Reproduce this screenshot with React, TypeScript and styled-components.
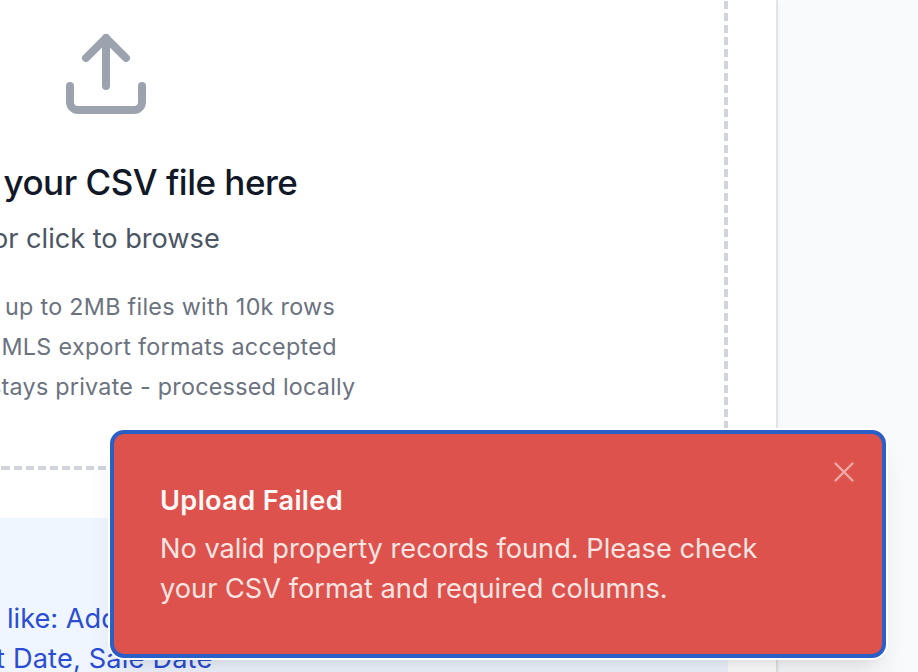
import React from "react";
import styled, { createGlobalStyle } from "styled-components";

const GlobalStyle = createGlobalStyle`
  * { box-sizing: border-box; }
  body { margin: 0; overflow: hidden; }
`;

const Page = styled.main`
  position: relative;
  width: 918px;
  height: 672px;
  overflow: hidden;
  background: #f9fafc;
  font-family: Inter, "Liberation Sans", sans-serif;
`;

const Card = styled.section`
  width: 778px;
  height: 672px;
  background: #fff;
  border-right: 2px solid #e4e4e4;
  box-shadow: 0 2px 4px rgba(0, 0, 0, 0.05);
`;

const DropZone = styled.div`
  display: flex;
  flex-direction: column;
  width: 728px;
  height: 470px;
  padding-top: 26px;
  overflow: hidden;
  background:
    repeating-linear-gradient(to bottom, #d1d5db 0 8px, transparent 8px 12px) right 0 top -11px / 4px 492px no-repeat,
    repeating-linear-gradient(to right, #d1d5db 0 8.1px, transparent 8.1px 12.08px) left -10.6px bottom 0 / 740px 4px no-repeat;
`;

const UploadIcon = styled.svg`
  width: 96px;
  height: 96px;
  margin-left: 58px;
  flex: none;
`;

type LineProps = { $x: number; $spacing: number };

const Heading = styled.h3<LineProps>`
  margin: 32px 0 0 ${(p) => p.$x}px;
  font-size: 35px;
  line-height: 56px;
  font-weight: 500;
  letter-spacing: ${(p) => p.$spacing}px;
  color: #111827;
  white-space: nowrap;
`;

const Hint = styled.p<LineProps>`
  margin: 9px 0 0 ${(p) => p.$x}px;
  font-size: 27.2px;
  line-height: 40px;
  letter-spacing: ${(p) => p.$spacing}px;
  color: #4b5563;
  white-space: nowrap;
`;

const Notes = styled.div`
  display: flex;
  flex-direction: column;
  gap: 8px;
  margin-top: 32px;
`;

const Note = styled.p<LineProps>`
  margin: 0 0 0 ${(p) => p.$x}px;
  font-size: 23.3px;
  line-height: 32px;
  letter-spacing: ${(p) => p.$spacing}px;
  color: #6b7280;
  white-space: nowrap;
`;

const InfoPanel = styled.div`
  width: 728px;
  height: 154px;
  margin-top: 48px;
  padding-top: 81px;
  overflow: hidden;
  background: #eff6ff;
`;

const InfoLine = styled.p<LineProps>`
  margin: 0 0 0 ${(p) => p.$x}px;
  font-size: 27.2px;
  line-height: 40px;
  letter-spacing: ${(p) => p.$spacing}px;
  color: #2b4dd3;
  white-space: nowrap;
`;

const Toast = styled.div`
  position: absolute;
  right: 32px;
  bottom: 14px;
  width: 776px;
  height: 228px;
  padding: 47px 46px 45px;
  border: 4px solid #2a5fc7;
  border-radius: 14px;
  background: #dd524c;
  box-shadow: 0 0 0 2px #fff, 0 20px 30px -6px rgba(0, 0, 0, 0.1), 0 8px 12px -8px rgba(0, 0, 0, 0.1);
`;

const ToastTitle = styled.div`
  font-size: 27.2px;
  line-height: 40px;
  font-weight: 600;
  letter-spacing: 0.33px;
  color: #fff8f7;
`;

const ToastLine = styled.div`
  font-size: 27.2px;
  line-height: 40px;
  color: #fae5e3;
  white-space: nowrap;
`;

const ToastBody = styled.div`
  margin-top: 8px;
`;

const CloseButton = styled.button`
  position: absolute;
  top: 22px;
  right: 22px;
  display: flex;
  width: 32px;
  height: 32px;
  padding: 0;
  border: 0;
  background: transparent;
  color: #efa9a5;
`;

export default function App() {
  return (
    <>
      <GlobalStyle />
      <Page>
        <Card>
          <DropZone>
            <UploadIcon viewBox="0 0 24 24" fill="none" stroke="#9ca3af" strokeWidth="2" strokeLinecap="round" strokeLinejoin="round">
              <path d="M21 15v4a2 2 0 0 1-2 2H5a2 2 0 0 1-2-2v-4" />
              <path d="M17 8l-5-5-5 5" />
              <path d="M12 3v12" />
            </UploadIcon>
            <Heading $x={3.5} $spacing={-0.5}>your CSV file here</Heading>
            <Hint $x={-8} $spacing={-0.03}>or click to browse</Hint>
            <Notes>
              <Note $x={5} $spacing={0.3}>up to 2MB files with 10k rows</Note>
              <Note $x={1.5} $spacing={0.32}>MLS export formats accepted</Note>
              <Note $x={-11} $spacing={0.26}>stays private - processed locally</Note>
            </Notes>
          </DropZone>
          <InfoPanel>
            <InfoLine $x={7} $spacing={0}>like: Address,</InfoLine>
            <InfoLine $x={-4} $spacing={0.17}>t Date, Sale Date</InfoLine>
          </InfoPanel>
        </Card>
        <Toast role="alert">
          <ToastTitle>Upload Failed</ToastTitle>
          <ToastBody>
            <ToastLine>No valid property records found. Please check</ToastLine>
            <ToastLine>your CSV format and required columns.</ToastLine>
          </ToastBody>
          <CloseButton aria-label="Close">
            <svg width="32" height="32" viewBox="0 0 32 32" fill="none" stroke="currentColor" strokeWidth="2.4" strokeLinecap="round">
              <path d="M7.5 7.5l17 17M24.5 7.5L7.5 24.5" />
            </svg>
          </CloseButton>
        </Toast>
      </Page>
    </>
  );
}
